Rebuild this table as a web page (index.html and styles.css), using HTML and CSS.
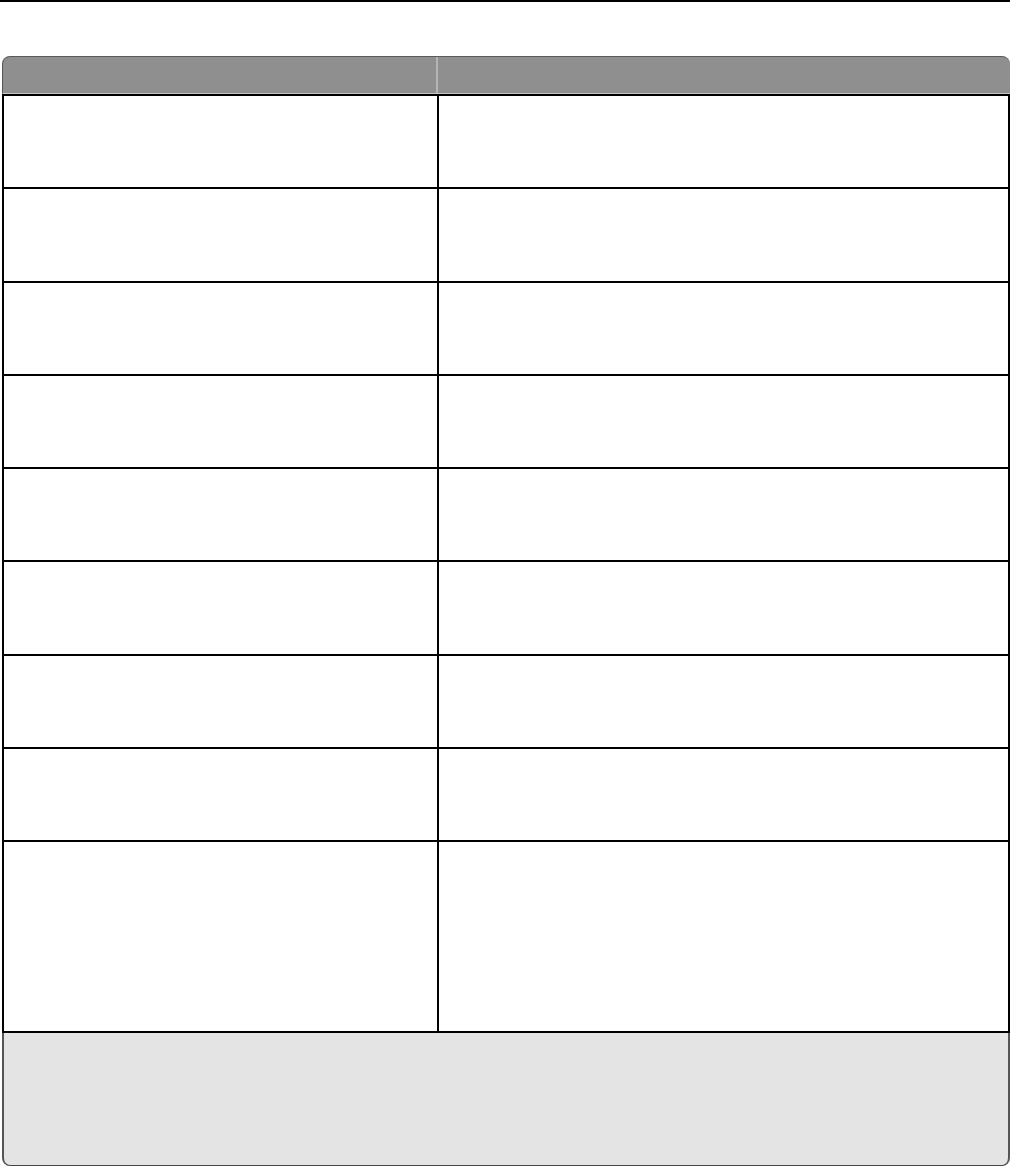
FILE: index.html
```html
<!DOCTYPE html>
<html lang="en">
<head>
    <meta charset="UTF-8">
    <title>Table</title>
    <link rel="stylesheet" href="styles.css">
</head>
<body>
    <div class="top-rule"></div>

    <div class="table">
        <div class="head">
            <div class="head-cell"></div>
            <div class="head-cell"></div>
        </div>

        <div class="row"><div class="cell"></div><div class="cell"></div></div>
        <div class="row"><div class="cell"></div><div class="cell"></div></div>
        <div class="row"><div class="cell"></div><div class="cell"></div></div>
        <div class="row"><div class="cell"></div><div class="cell"></div></div>
        <div class="row"><div class="cell"></div><div class="cell"></div></div>
        <div class="row"><div class="cell"></div><div class="cell"></div></div>
        <div class="row"><div class="cell"></div><div class="cell"></div></div>
        <div class="row"><div class="cell"></div><div class="cell"></div></div>
        <div class="row tall"><div class="cell"></div><div class="cell"></div></div>

        <div class="foot"></div>
    </div>
</body>
</html>
```

FILE: styles.css
```css
body {
    margin: 0;
    font-family: "Liberation Sans", Arial, sans-serif;
    background: #fff;
}
.top-rule {
    height: 2px;
    background: #000;
}
.table {
    margin: 54px 0 0 2px;
    width: 1008px;
}
.head {
    display: grid;
    grid-template-columns: 435px 1fr;
    height: 36px;
    background: #8f8f8f;
    border-top: 1px solid #5a5a5a;
    border-left: 1px solid #555;
    border-bottom: 1px solid #c6c6c6;
    border-radius: 8px 8px 0 0;
}
.head-cell:first-child {
    border-right: 2px solid #b4b4b4;
}
.row {
    display: grid;
    grid-template-columns: 435px 1fr;
    height: 93.3px;
    box-sizing: border-box;
    border-left: 2px solid #000;
    border-right: 2px solid #000;
    border-top: 2px solid #000;
}
.row.tall {
    height: 193px;
    border-bottom: 2px solid #000;
}
.cell:first-child {
    border-right: 2px solid #000;
}
.foot {
    height: 132px;
    background: #e4e4e4;
    border-left: 2px solid #555;
    border-right: 2px solid #555;
    border-bottom: 1px solid #444;
    border-radius: 0 0 8px 8px;
}
```
